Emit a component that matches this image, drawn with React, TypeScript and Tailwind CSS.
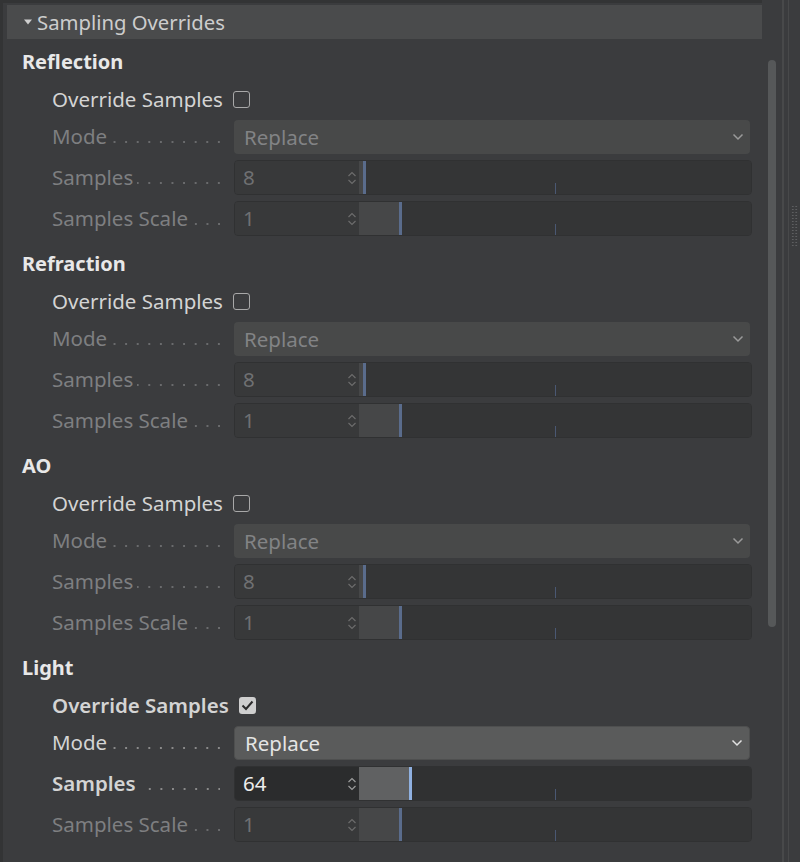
import React from "react";

/**
 * SamplingOverrides — attribute-manager style panel with per-ray sample overrides.
 */

type Section = {
    title: string;
    override: boolean;
    samples: string;
    samplesFill: number;
    scaleFill: number;
};

const SECTIONS: Section[] = [
    { title: "Reflection", override: false, samples: "8", samplesFill: 4, scaleFill: 40 },
    { title: "Refraction", override: false, samples: "8", samplesFill: 4, scaleFill: 40 },
    { title: "AO", override: false, samples: "8", samplesFill: 4, scaleFill: 40 },
    { title: "Light", override: true, samples: "64", samplesFill: 50, scaleFill: 40 },
];

const FONT = "font-['Noto_Sans','Open_Sans',sans-serif]";

function Chevron({ active }: { active: boolean }) {
    return (
        <svg width="12" height="8" viewBox="0 0 12 8" className="shrink-0">
            <path d="M1.5 1.5 L6 6 L10.5 1.5" fill="none" stroke={active ? "#e2e2e2" : "#9a9a9a"} strokeWidth="1.5" />
        </svg>
    );
}

function Spinner({ active }: { active: boolean }) {
    const c = active ? "#9c9c9c" : "#6c6c6c";
    return (
        <svg width="10" height="16" viewBox="0 0 10 16" className="shrink-0">
            <path d="M1.5 6 L5 2.5 L8.5 6" fill="none" stroke={c} strokeWidth="1.2" />
            <path d="M1.5 10 L5 13.5 L8.5 10" fill="none" stroke={c} strokeWidth="1.2" />
        </svg>
    );
}

function Label({ text, tone, bold }: { text: string; tone: "off" | "on"; bold?: boolean }) {
    return (
        <div className="flex items-end w-[168px] h-full pb-[5px]">
            <span
                className={`whitespace-nowrap text-[20.5px] leading-[25px] ${bold ? "font-semibold" : ""} ${tone === "on" ? "text-[#d4d4d4]" : "text-[#7e7f81]"}`}
            >
                {text}
            </span>
            <div
                className={`flex-1 ml-[4px] mb-[6px] h-[2px] bg-repeat-x bg-right ${tone === "on" ? "bg-[linear-gradient(to_left,#8a8a8a_2px,transparent_2px)]" : "bg-[linear-gradient(to_left,#6a6b6d_2px,transparent_2px)]"} bg-[length:11.6px_2px]`}
            />
        </div>
    );
}

function NumberSlider({ value, fill, active }: { value: string; fill: number; active: boolean }) {
    return (
        <div className="flex flex-1 h-[35px] rounded-[4px] border border-[#303132] overflow-hidden">
            <div className={`flex items-center w-[124px] pl-[8px] pr-[2px] ${active ? "bg-[#2b2c2d]" : "bg-[#38393a]"}`}>
                <span className={`flex-1 text-[20.5px] ${active ? "text-[#ececec]" : "text-[#6f7072]"}`}>{value}</span>
                <Spinner active={active} />
            </div>
            <div className={`relative flex-1 ${active ? "bg-[#303132]" : "bg-[#343536]"}`}>
                <div
                    className={`absolute left-0 top-0 bottom-0 ${active ? "bg-[#606162]" : "bg-[#464748]"}`}
                    style={{ width: fill }}
                />
                <div
                    className={`absolute top-0 bottom-0 w-[3px] ${active ? "bg-[#8fb0e0]" : "bg-[#5a6c8c]"}`}
                    style={{ left: fill }}
                />
                <div className="absolute bottom-0 left-1/2 w-[1px] h-[11px] bg-[#4a5873]" />
            </div>
        </div>
    );
}

function SectionBlock({ s }: { s: Section }) {
    const on = s.override;
    return (
        <div className="flex flex-col pb-[8px]">
            <div className="flex items-center h-[40px] pl-[19px]">
                <span className="text-[20px] font-bold text-[#e8e8e8]">{s.title}</span>
            </div>

            {/* Override toggle */}
            <div className="flex items-center h-[34px] pl-[49px]">
                <span className={`text-[20.5px] text-[#d4d4d4] ${on ? "font-semibold" : ""}`}>Override Samples</span>
                {on ? (
                    <div className="ml-[10px] w-[17px] h-[17px] rounded-[3px] bg-[#cfcfcf] flex items-center justify-center">
                        <svg width="13" height="11" viewBox="0 0 13 11">
                            <path d="M1.5 5.5 L5 9 L11.5 1.5" fill="none" stroke="#2b2b2b" strokeWidth="2" />
                        </svg>
                    </div>
                ) : (
                    <div className="ml-[10px] w-[17px] h-[17px] rounded-[3px] border-[1.5px] border-[#a8a8a8]" />
                )}
            </div>

            {/* Mode */}
            <div className="flex items-stretch h-[34px] mt-[4px] pl-[49px] pr-[12px]">
                <Label text="Mode" tone={on ? "on" : "off"} />
                <div className="w-[14px]" />
                <div
                    className={`flex flex-1 items-center justify-between pl-[10px] pr-[6px] rounded-[4px] ${on ? "bg-[#5a5b5b] border border-[#4e4f4f]" : "bg-[#484949]"}`}
                >
                    <span className={`text-[20.5px] ${on ? "text-[#e4e4e4]" : "text-[#828385]"}`}>Replace</span>
                    <Chevron active={on} />
                </div>
            </div>

            {/* Samples */}
            <div className="flex items-stretch h-[35px] mt-[6px] pl-[49px] pr-[10px]">
                <Label text="Samples" tone={on ? "on" : "off"} bold={on} />
                <div className="w-[14px]" />
                <NumberSlider value={s.samples} fill={s.samplesFill} active={on} />
            </div>

            {/* Samples Scale */}
            <div className="flex items-stretch h-[35px] mt-[6px] pl-[49px] pr-[10px]">
                <Label text="Samples Scale" tone="off" />
                <div className="w-[14px]" />
                <NumberSlider value="1" fill={s.scaleFill} active={false} />
            </div>
        </div>
    );
}

export default function App() {
    return (
        <div className={`${FONT} w-[800px] h-[862px] overflow-hidden bg-[#3b3c3e] flex`}>
            {/* left frame edge */}
            <div className="w-[3px] h-full bg-[#333435] shrink-0" />

            <div className="flex flex-col w-[759px] shrink-0">
                <div className="h-[3px] bg-[#333435]" />
                <div className="h-[2px]" />
                {/* Group header */}
                <div className="flex items-center h-[34px] ml-[4px] bg-[#4a4b4c] pl-[16px]">
                    <svg width="10" height="8" viewBox="0 0 10 8" className="mr-[4px]">
                        <path d="M1 1.5 L9 1.5 L5 6.5 Z" fill="#cfcfcf" />
                    </svg>
                    <span className="text-[20.3px] text-[#cdcdcd]">Sampling Overrides</span>
                </div>
                <div className="h-[3px]" />

                {SECTIONS.map((s) => (
                    <SectionBlock key={s.title} s={s} />
                ))}
            </div>

            {/* scrollbar */}
            <div className="w-[20px] shrink-0 pt-[60px] pl-[6px]">
                <div className="w-[8px] h-[567px] rounded-full bg-[#565859]" />
            </div>

            {/* right rail */}
            <div className="flex-1 flex">
                <div className="w-[2px] h-full bg-[#48494a]" />
                <div className="w-[4px]" />
                <div className="w-[1px] h-full bg-[#48494a]" />
                <div className="flex-1 pt-[205px] pl-[2px]">
                    <div className="w-[7px] h-[42px] bg-[radial-gradient(circle,#5e5f61_0.8px,transparent_1px)] bg-[length:3.5px_3px]" />
                </div>
            </div>
        </div>
    );
}
